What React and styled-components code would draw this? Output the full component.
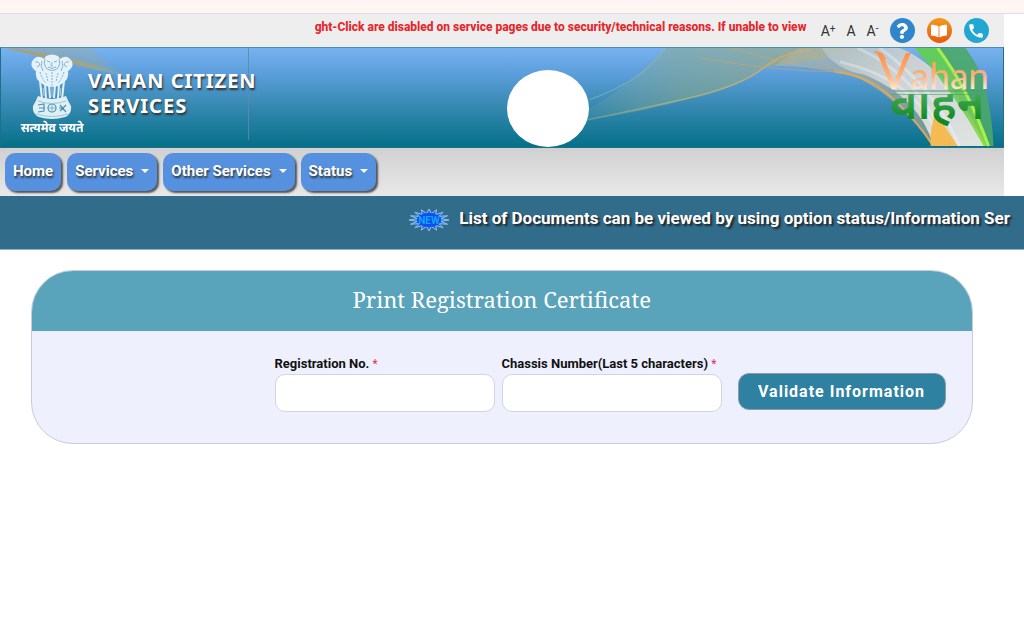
import React from 'react';
import styled, { createGlobalStyle } from 'styled-components';
import { FaQuestion, FaBookOpen } from 'react-icons/fa';
import { MdCall } from 'react-icons/md';

const GlobalStyle = createGlobalStyle`
* {
    box-sizing: border-box;
}
body {
    margin: 0;
    background: #fff;
    color: #111;
    font-family: Roboto, "Noto Sans", sans-serif;
    overflow-x: hidden;
}
`

const Strip = styled.div`
height: 14px;
background: #fff5f4;
border-bottom: 1px solid #e6dcdb;
`
const Shell = styled.div`
width: 98%;
`

/* top bar */
const TopBar = styled.div`
display: flex;
align-items: center;
justify-content: flex-end;
height: 33px;
padding-right: 15px;
background: #eee;
`
const Notice = styled.div`
width: 498px;
height: 26px;
margin-right: 8px;
overflow: hidden;
white-space: nowrap;
color: #e8262b;
font-size: 12px;
font-weight: 800;
line-height: 18px;
`
const FontSizes = styled.div`
display: flex;
gap: 11px;
margin-right: 11px;
`
const FontButton = styled.button`
padding: 0;
border: 0;
background: none;
color: #333;
font-family: Roboto, sans-serif;
font-size: 14px;
line-height: 20px;
cursor: pointer;
& sup {
    font-size: 10px;
    line-height: 0;
    vertical-align: 4px;
}
`
const RoundLinks = styled.div`
display: flex;
gap: 12px;
`
const RoundLink = styled.a`
display: flex;
align-items: center;
justify-content: center;
width: 25px;
height: 25px;
border-radius: 50%;
background: ${({ $color }) => $color};
color: #fff;
`

/* banner */
const Banner = styled.header`
position: relative;
display: flex;
height: 101px;
border: 1px solid #1d6f8a;
border-top-color: #4a8fa8;
background: linear-gradient(#78b1f0, #5c9fdc 25%, #3a8bb5 55%, #057088);
`
const Waves = styled.svg`
position: absolute;
inset: 0;
width: 100%;
height: 100%;
`
const Brand = styled.div`
position: relative;
display: flex;
width: 248px;
padding: 6px 0 0 19px;
background: linear-gradient(#5a92b8, #4f8aa2) right top / 1px 92px no-repeat;
`
const EmblemBox = styled.div`
display: flex;
flex-direction: column;
flex-shrink: 0;
align-items: center;
width: 64px;
`
const Motto = styled.span`
color: #fff;
font-family: "Noto Sans", "Noto Sans Devanagari", sans-serif;
font-size: 12px;
font-weight: 700;
line-height: 16px;
white-space: nowrap;
`
const SiteName = styled.h1`
margin: 14px 0 0 4px;
color: #fff;
font-family: "Noto Sans", sans-serif;
font-size: 20px;
font-weight: 700;
line-height: 25px;
letter-spacing: 1px;
white-space: nowrap;
text-shadow: 1px 2px 2px #333;
`
const BannerMiddle = styled.div`
position: relative;
display: flex;
flex: 1;
align-items: flex-end;
justify-content: center;
`
const Spot = styled.div`
width: 82px;
height: 77px;
border-radius: 50%;
background: #fff;
`
const VahanLogo = styled.svg`
position: relative;
width: 156px;
height: 99px;
overflow: visible;
`

/* menu */
const Menu = styled.nav`
display: flex;
gap: 6px;
height: 48px;
padding: 5px;
background: linear-gradient(#d0d0d0, #e8e8e8);
`
const MenuButton = styled.button`
display: flex;
align-items: center;
gap: 8px;
height: 38px;
padding: 0 8px 2px;
border: 0;
border-radius: 10px;
background: #5591df;
box-shadow: 2px 2px 2px #555;
color: #fff;
font-family: Roboto, sans-serif;
font-size: 15px;
font-weight: 700;
text-shadow: 1px 2px 2px #333;
cursor: pointer;
`
const Caret = styled.span`
border: 4px solid transparent;
border-top-color: #fff;
border-bottom: 0;
`

/* news line */
const News = styled.div`
display: flex;
justify-content: flex-end;
gap: 10px;
height: 54px;
padding: 10px 8px 0 0;
overflow: hidden;
background: #316c8b;
border-bottom: 1px solid #8fb0c0;
`
const NewsText = styled.span`
margin-right: 6px;
color: #fff;
font-size: 17px;
font-weight: 700;
line-height: 25px;
white-space: nowrap;
text-shadow: 2px 2px 2px #222;
`

/* form */
const Main = styled.main`
padding: 20px 31px;
`
const Card = styled.section`
overflow: hidden;
border: 1px solid #c9cbdc;
border-radius: 42px;
background: #eef0fe;
`
const CardTitle = styled.h2`
margin: 0;
padding-bottom: 3px;
background: #5aa4bb;
color: #fff;
font-family: "Noto Serif", "Droid Serif", "Liberation Serif", serif;
font-size: 22px;
font-weight: 400;
line-height: 57px;
text-align: center;
`
const Form = styled.form`
display: flex;
align-items: flex-end;
justify-content: flex-end;
padding: 23px 26px 31px;
`
const Field = styled.div`
display: flex;
flex-direction: column;
width: 220px;
margin-right: ${({ $last }) => ($last ? '16px' : '7px')};
`
const Label = styled.label`
font-size: 13px;
font-weight: 700;
line-height: 20px;
white-space: nowrap;
`
const Required = styled.span`
color: #e0304e;
font-size: 12px;
font-weight: 400;
`
const Input = styled.input`
width: 100%;
height: 38px;
padding: 0 12px;
border: 1px solid #d3d4dc;
border-radius: 10px;
background: #fff;
font-size: 14px;
`
const Submit = styled.button`
width: 208px;
height: 37px;
margin-bottom: 2px;
border: 1px solid #8d9aa8;
border-radius: 11px;
background: #2e81a0;
color: #fff;
font-family: Roboto, sans-serif;
font-size: 16px;
font-weight: 700;
letter-spacing: 1px;
cursor: pointer;
`

const menuItems = [
    { label: 'Home' },
    { label: 'Services', more: true },
    { label: 'Other Services', more: true },
    { label: 'Status', more: true },
]

function Emblem() {
    return (
        <svg width="44" height="66" viewBox="0 0 44 66" aria-hidden="true">
            {/* lions */}
            <path d="M16 2 Q22-1 28 2 L30 5 Q35 1 39 4 Q44 8 42 13 Q40 16 38 17 Q39 25 34 28 Q29 33 22 33 Q15 33 10 28 Q5 25 6 17 Q4 16 2 13 Q0 8 5 4 Q9 1 14 5Z" fill="#e4f2fb" />
            <g fill="none" stroke="#86b4d2" strokeWidth="1">
                <path d="M15 5 Q13 10 16 14 Q22 19 28 14 Q31 10 29 5" />
                <path d="M17 7 L20 8 M24 8 L27 7 M22 8 L21 12 L23 12 M18 13 Q22 16 26 13" />
                <path d="M5 8 Q9 7 10 11 L7 13 M39 8 Q35 7 34 11 L37 13 M12 7 Q10 13 13 17 M32 7 Q34 13 31 17" />
                <path d="M10 18 Q12 25 16 29 M34 18 Q32 25 28 29 M16 19 L18 28 M28 19 L26 28 M22 18 V31" strokeDasharray="2 1" />
            </g>
            {/* legs */}
            <path d="M10 27 L12 45 M15 30 L16 45 M19 31 L20 44 M25 31 L24 44 M29 30 L28 45 M34 27 L32 45" stroke="#e2f0f8" strokeWidth="2" />
            <path d="M22 31 V43 M13 34 L14 42 M31 34 L30 42" stroke="#a9cfe2" strokeWidth="1" />
            {/* abacus */}
            <path d="M8 42 Q22 48 36 42 Q38 47 41 52 Q42 60 35 63 Q22 67 9 63 Q2 60 3 52 Q6 47 8 42Z" fill="#dfeff6" />
            <g fill="none" stroke="#4c91b4" strokeWidth="1.2">
                <circle cx="22" cy="54" r="4" />
                <path d="M22 51 V57 M19 54 H25" strokeWidth="0.6" />
                <path d="M8 51 L14 50 L14 57 L8 58 M9 54 H15 M36 51 L30 57 M30 51 L36 58 M29 54 H34" />
                <path d="M6 60 Q22 65 38 60 M8 47 Q22 52 36 47" stroke="#8dbcd0" strokeWidth="0.8" />
            </g>
        </svg>
    )
}

function BannerWaves() {
    return (
        <Waves viewBox="0 0 1003 100" preserveAspectRatio="none" aria-hidden="true">
            <defs>
                <linearGradient id="streak">
                    <stop offset="0" stopColor="#b09a58" stopOpacity="0.85" />
                    <stop offset="0.7" stopColor="#b3a66e" stopOpacity="0.6" />
                    <stop offset="1" stopColor="#8fae9c" stopOpacity="0" />
                </linearGradient>
                <linearGradient id="veil">
                    <stop offset="0" stopColor="#83a897" stopOpacity="0" />
                    <stop offset="0.4" stopColor="#87a88c" stopOpacity="0.55" />
                    <stop offset="1" stopColor="#a3ab8a" stopOpacity="0.75" />
                </linearGradient>
                <linearGradient id="goldLine">
                    <stop offset="0" stopColor="#c9c48a" stopOpacity="0.3" />
                    <stop offset="1" stopColor="#d8a856" />
                </linearGradient>
                <linearGradient id="white" x1="0" y1="0" x2="1" y2="1">
                    <stop offset="0" stopColor="#b7c6c8" stopOpacity="0.7" />
                    <stop offset="0.35" stopColor="#cfd3d4" />
                    <stop offset="1" stopColor="#eceae6" />
                </linearGradient>
                <linearGradient id="green" x1="0" y1="0" x2="0" y2="1">
                    <stop offset="0" stopColor="#5ed04c" />
                    <stop offset="0.6" stopColor="#74c95a" />
                    <stop offset="1" stopColor="#8fe03c" />
                </linearGradient>
            </defs>
            <path d="M4 0 H90 Q110 20 135 31 Q60 14 4 0Z" fill="url(#streak)" opacity="0.4" />
            <path d="M4 0 Q80 9 135 31 Q70 17 4 0Z" fill="url(#streak)" />
            <path d="M560 75 Q620 50 665 0 H860 Q820 14 765 19 Q735 40 700 48 Q640 66 585 73Z" fill="url(#veil)" />
            <path d="M590 52 Q645 32 665 0" fill="none" stroke="#a4c0a5" opacity="0.6" />
            <path d="M585 73 Q640 62 700 48 Q745 36 765 19 Q785 3 812 2" fill="none" stroke="url(#goldLine)" strokeWidth="1.5" />
            <path d="M700 10 Q780 24 840 24 Q865 27 880 40 M765 19 Q790 8 800 0 Q820 18 850 25 M730 0 Q790 17 835 24" fill="none" stroke="#d5a45d" opacity="0.6" />
            <path d="M775 18 Q840 20 860 31 Q900 52 933 98 L940 70 Q900 20 858 0 H800Z" fill="#b7b49a" opacity="0.55" />
            <path d="M822 0 H900 Q950 20 986 99 H934 Q920 50 865 27 Q835 22 822 0Z" fill="url(#white)" opacity="0.95" />
            <path d="M858 0 Q920 28 948 99 M880 0 Q935 40 960 99 M840 14 Q910 30 935 80" fill="none" stroke="#fff" strokeWidth="3" opacity="0.3" />
            <path d="M835 24 Q870 28 895 53 Q916 72 933 98" fill="none" stroke="#dfa65c" strokeWidth="2" />
            <path d="M931 99 Q930 80 936 66 Q946 80 958 99Z" fill="#f4bb55" />
            <path d="M938 0 H966 Q984 24 988 50 Q993 75 994 99 H987 Q966 40 938 0Z" fill="#4aa869" opacity="0.9" />
            <path d="M915 0 H938 Q965 35 990 99 H984 Q955 45 915 0Z" fill="url(#green)" opacity="0.9" />
            <path d="M938 0 Q968 40 989 99" fill="none" stroke="#a5f04f" strokeWidth="3" />
        </Waves>
    )
}

function NewBadge() {
    // spiky burst, alternating long and short rays
    const rays = Array.from({ length: 32 }, (_, i) => {
        const a = (i * Math.PI) / 16
        const k = i % 2 ? 0.6 : 1
        return `${20 + Math.cos(a) * 20 * k},${11 + Math.sin(a) * 11 * k}`
    }).join(' ')
    return (
        <svg width="40" height="28" viewBox="0 -3 40 28" role="img" aria-label="New">
            <polygon points={rays} fill="#2d6ad8" stroke="#8fc3f5" strokeWidth="1" />
            <ellipse cx="20" cy="11" rx="12" ry="7" fill="#0a4ff0" />
            <text x="20" y="15" textAnchor="middle" fontFamily="Roboto, sans-serif" fontSize="10" fontWeight="700" fill="#16a4f5">NEW</text>
        </svg>
    )
}

function App() {
    return (
        <>
            <GlobalStyle />
            <Strip />
            <Shell>
                <TopBar>
                    <Notice>ght-Click are disabled on service pages due to security/technical reasons. If unable to view</Notice>
                    <FontSizes>
                        <FontButton type="button">A<sup>+</sup></FontButton>
                        <FontButton type="button">A</FontButton>
                        <FontButton type="button">A<sup>-</sup></FontButton>
                    </FontSizes>
                    <RoundLinks>
                        <RoundLink href="#help" aria-label="Help" $color="#2f86cc"><FaQuestion size={16} /></RoundLink>
                        <RoundLink href="#manual" aria-label="User manual" $color="linear-gradient(#f59a1c, #e8590c)"><FaBookOpen size={16} /></RoundLink>
                        <RoundLink href="#contact" aria-label="Contact us" $color="#22a7d3"><MdCall size={18} /></RoundLink>
                    </RoundLinks>
                </TopBar>
                <Banner>
                    <BannerWaves />
                    <Brand>
                        <EmblemBox>
                            <Emblem />
                            <Motto lang="hi">सत्यमेव जयते</Motto>
                        </EmblemBox>
                        <SiteName>VAHAN CITIZEN<br />SERVICES</SiteName>
                    </Brand>
                    <BannerMiddle>
                        <Spot />
                    </BannerMiddle>
                    <VahanLogo viewBox="0 0 156 99">
                        <defs>
                            <linearGradient id="saffron" x1="0" y1="0" x2="0" y2="1">
                                <stop offset="0.2" stopColor="#ff8f45" />
                                <stop offset="0.6" stopColor="#fdb27c" />
                                <stop offset="0.85" stopColor="#fff0e0" />
                            </linearGradient>
                            <linearGradient id="leaf" x1="0" y1="0" x2="0" y2="1">
                                <stop offset="0.3" stopColor="#4fae62" />
                                <stop offset="0.8" stopColor="#0f8a1c" />
                            </linearGradient>
                            <clipPath id="belowLine">
                                <rect x="30" y="46" width="126" height="50" />
                            </clipPath>
                        </defs>
                        <path d="M27 4 Q34 3 38 11" fill="none" stroke="#f59a50" strokeWidth="2" />
                        <text x="30" y="41" fontFamily="Lato, sans-serif" fontSize="37" fill="url(#saffron)"><tspan fontSize="50">V</tspan>ahan</text>
                        <path d="M46 43 H140" stroke="#4b9a7a" strokeWidth="1" />
                        <g clipPath="url(#belowLine)">
                            <text x="43" y="71" lang="hi" fontFamily="'Noto Sans', 'Noto Sans Devanagari', sans-serif" fontSize="47" fontWeight="600" fill="url(#leaf)">वाहन</text>
                        </g>
                    </VahanLogo>
                </Banner>
                <Menu>
                    {menuItems.map((item) => (
                        <MenuButton key={item.label} type="button">
                            {item.label}
                            {item.more && <Caret />}
                        </MenuButton>
                    ))}
                </Menu>
            </Shell>
            <News>
                <NewBadge />
                <NewsText>List of Documents can be viewed by using option status/Information Ser</NewsText>
            </News>
            <Shell>
                <Main>
                    <Card>
                        <CardTitle>Print Registration Certificate</CardTitle>
                        <Form onSubmit={(e) => e.preventDefault()}>
                            <Field>
                                <Label htmlFor="regn">Registration No. <Required>*</Required></Label>
                                <Input id="regn" type="text" />
                            </Field>
                            <Field $last>
                                <Label htmlFor="chassis">Chassis Number(Last 5 characters) <Required>*</Required></Label>
                                <Input id="chassis" type="text" maxLength={5} />
                            </Field>
                            <Submit type="submit">Validate Information</Submit>
                        </Form>
                    </Card>
                </Main>
            </Shell>
        </>
    )
}

export default App;
